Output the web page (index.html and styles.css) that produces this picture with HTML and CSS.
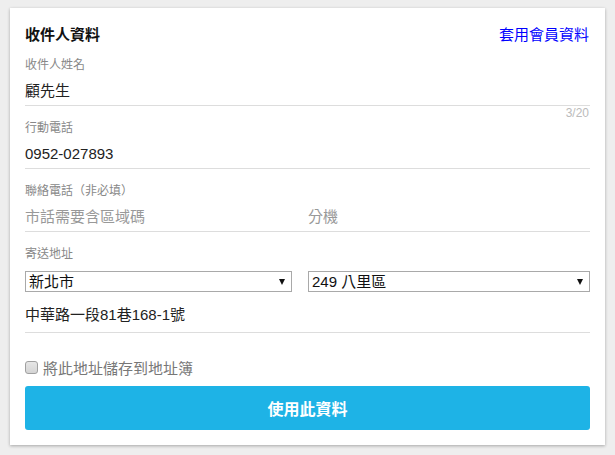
FILE: index.html
```html
<!DOCTYPE html>
<html lang="zh-Hant">
<head>
<meta charset="UTF-8">
<meta name="viewport" content="width=device-width, initial-scale=1.0">
<title>收件人資料</title>
<link rel="stylesheet" href="styles.css">
</head>
<body>
    <div class="card">
        <div class="card-head">
            <h2 class="card-title">收件人資料</h2>
            <a href="#" class="member-link">套用會員資料</a>
        </div>

        <div class="field">
            <label class="field-label">收件人姓名</label>
            <input type="text" class="line-input" value="顧先生">
            <span class="counter">3/20</span>
        </div>

        <div class="field">
            <label class="field-label">行動電話</label>
            <input type="text" class="line-input" value="0952-027893">
        </div>

        <div class="field">
            <label class="field-label">聯絡電話（非必填）</label>
            <div class="split-row">
                <input type="text" class="plain-input" placeholder="市話需要含區域碼">
                <input type="text" class="plain-input" placeholder="分機">
            </div>
        </div>

        <div class="field">
            <label class="field-label">寄送地址</label>
            <div class="select-row">
                <div class="select-box">
                    <select>
                        <option>新北市</option>
                    </select>
                </div>
                <div class="select-box">
                    <select>
                        <option>249 八里區</option>
                    </select>
                </div>
            </div>
            <input type="text" class="line-input address" value="中華路一段81巷168-1號">
        </div>

        <label class="save-row">
            <input type="checkbox" class="save-check">
            <span>將此地址儲存到地址簿</span>
        </label>

        <button type="button" class="submit-btn">使用此資料</button>
    </div>
</body>
</html>
```

FILE: styles.css
```css
body {
    margin: 0;
    padding: 8px 10px;
    background-color: #eeeeee;
    font-family: "Liberation Sans", "Noto Sans CJK TC", sans-serif;
    color: #222;
}
.card {
    background-color: #ffffff;
    box-shadow: 0 1px 3px rgba(0, 0, 0, 0.3);
    padding: 15px;
    display: flex;
    flex-direction: column;
}
.card-head {
    display: flex;
    align-items: center;
    justify-content: space-between;
    height: 21px;
}
.card-title {
    margin: 0;
    font-size: 15px;
    font-weight: bold;
    color: #111;
}
.member-link {
    text-decoration: none;
    color: #0000ff;
    font-size: 15px;
    margin-right: 1px;
}
.field {
    position: relative;
    display: flex;
    flex-direction: column;
    margin-top: 13px;
}
.field + .field {
    margin-top: 14px;
}
.field-label {
    font-size: 12px;
    line-height: 16px;
    color: #888;
    margin-bottom: 3px;
}
.line-input, .plain-input {
    border: none;
    outline: none;
    font-family: inherit;
    font-size: 15px;
    line-height: 20px;
    height: 20px;
    color: #222;
    background: transparent;
    padding: 0;
    margin: 0;
    min-width: 0;
}
.line-input {
    padding: 5px 0 4px;
    border-bottom: 1px solid #dddddd;
}
.plain-input::placeholder {
    color: #999;
}
.split-row {
    display: grid;
    grid-template-columns: 267px 1fr;
    column-gap: 16px;
    padding: 5px 0 4px;
    border-bottom: 1px solid #dddddd;
}
.counter {
    position: absolute;
    right: 1px;
    top: 100%;
    font-size: 12px;
    line-height: 14px;
    color: #bbb;
}
.select-row {
    display: grid;
    grid-template-columns: 267px 1fr;
    column-gap: 16px;
    margin-top: 6px;
}
.select-box {
    position: relative;
}
.select-box select {
    appearance: none;
    -webkit-appearance: none;
    width: 100%;
    height: 21px;
    border: 1px solid #a9a9a9;
    border-radius: 0;
    background-color: #fff;
    font-family: inherit;
    font-size: 15px;
    color: #111;
    padding: 0 20px 0 3px;
    margin: 0;
    outline: none;
}
.select-box::after {
    content: "";
    position: absolute;
    right: 7px;
    top: 8px;
    border-left: 3px solid transparent;
    border-right: 3px solid transparent;
    border-top: 6px solid #111;
    pointer-events: none;
}
.address {
    margin-top: 8px;
    padding-bottom: 7px;
}
.save-row {
    display: flex;
    align-items: center;
    gap: 5px;
    margin-top: 24px;
    height: 20px;
    font-size: 15px;
    color: #777;
}
.save-check {
    appearance: none;
    -webkit-appearance: none;
    width: 13px;
    height: 13px;
    margin: 0;
    border: 1px solid #a0a0a0;
    border-radius: 3px;
    background: linear-gradient(#e6e6e6, #d4d4d4);
}
.submit-btn {
    margin-top: 9px;
    height: 44px;
    border: none;
    border-radius: 3px;
    background-color: #1eb3e6;
    color: #ffffff;
    font-family: inherit;
    font-size: 16px;
    font-weight: bold;
    cursor: pointer;
}
```
